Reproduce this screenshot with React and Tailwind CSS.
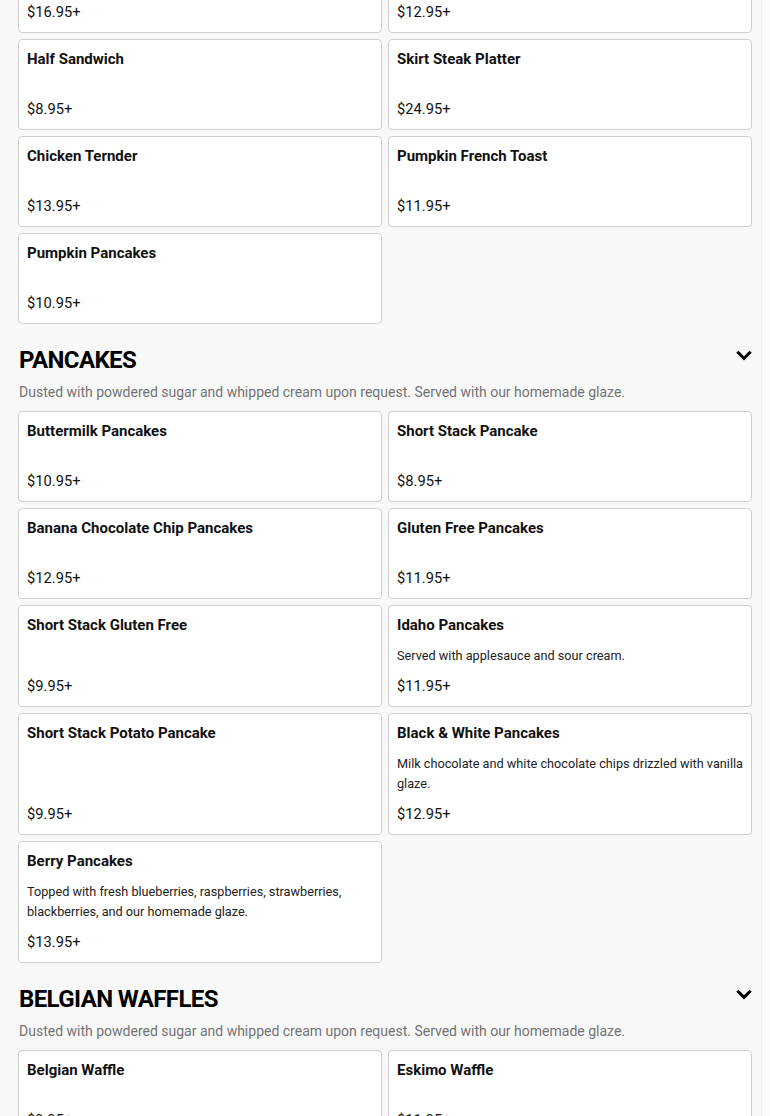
import React from "react";

const prevItems = [
  { name: "Turkey Club Sandwich", price: "$16.95+" },
  { name: "Grilled Cheese Platter", price: "$12.95+" },
  { name: "Half Sandwich", price: "$8.95+" },
  { name: "Skirt Steak Platter", price: "$24.95+" },
  { name: "Chicken Ternder", price: "$13.95+" },
  { name: "Pumpkin French Toast", price: "$11.95+" },
  { name: "Pumpkin Pancakes", price: "$10.95+" },
];

const sections = [
  {
    title: "Pancakes",
    desc: "Dusted with powdered sugar and whipped cream upon request. Served with our homemade glaze.",
    items: [
      { name: "Buttermilk Pancakes", price: "$10.95+" },
      { name: "Short Stack Pancake", price: "$8.95+" },
      { name: "Banana Chocolate Chip Pancakes", price: "$12.95+" },
      { name: "Gluten Free Pancakes", price: "$11.95+" },
      { name: "Short Stack Gluten Free", price: "$9.95+" },
      { name: "Idaho Pancakes", desc: "Served with applesauce and sour cream.", price: "$11.95+" },
      { name: "Short Stack Potato Pancake", price: "$9.95+" },
      {
        name: "Black & White Pancakes",
        desc: "Milk chocolate and white chocolate chips drizzled with vanilla glaze.",
        price: "$12.95+",
      },
      {
        name: "Berry Pancakes",
        desc: "Topped with fresh blueberries, raspberries, strawberries, blackberries, and our homemade glaze.",
        price: "$13.95+",
      },
    ],
  },
  {
    title: "Belgian Waffles",
    desc: "Dusted with powdered sugar and whipped cream upon request. Served with our homemade glaze.",
    items: [
      { name: "Belgian Waffle", price: "$9.95+" },
      { name: "Eskimo Waffle", price: "$11.95+" },
    ],
  },
];

function ItemCard({ item }) {
  return (
    <div className="flex min-h-[91px] flex-col rounded-[4px] border border-[#cfcfcf] bg-white px-2 pt-[9px] pb-[9px]">
      <div className="text-[15px] font-bold leading-[20px] text-[#111]">{item.name}</div>
      {item.desc && (
        <p className="mt-[11px] text-[12.7px] leading-[20px] text-[#222]">{item.desc}</p>
      )}
      <div className="mt-auto pt-[9px] text-[14.7px] leading-[22px] text-[#111]">{item.price}</div>
    </div>
  );
}

function Chevron() {
  return (
    <svg width="20" height="20" viewBox="0 0 24 24" fill="none" className="mt-[1px] mr-[-2px] shrink-0">
      <path d="M4 8l8 8 8-8" stroke="#000" strokeWidth="3.5" strokeLinecap="butt" strokeLinejoin="miter" />
    </svg>
  );
}

function Section({ section }) {
  return (
    <section className="mt-5">
      <div className="flex items-start justify-between">
        <h2 className="pl-px pt-px text-[24px] font-bold uppercase leading-[30px] tracking-[-0.6px] text-black">
          {section.title}
        </h2>
        <Chevron />
      </div>
      <p className="mt-[7px] pl-px text-[14px] leading-[20px] text-[#737373]">{section.desc}</p>
      <div className="mt-[9px] grid grid-cols-2 gap-[6px]">
        {section.items.map((item) => (
          <ItemCard key={item.name} item={item} />
        ))}
      </div>
    </section>
  );
}

export default function App() {
  return (
    <div className="h-[1116px] overflow-hidden bg-[#fcfcfc]" style={{ fontFamily: "Roboto, 'Liberation Sans', sans-serif" }}>
      <div className="flow-root h-full w-[762px] border-r border-[#efefef] bg-[#f8f8f8] pl-[18px] pr-[9px]">
        <div className="-mt-[58px] grid grid-cols-2 gap-[6px]">
          {prevItems.map((item) => (
            <ItemCard key={item.name} item={item} />
          ))}
        </div>
        {sections.map((s) => (
          <Section key={s.title} section={s} />
        ))}
      </div>
    </div>
  );
}
